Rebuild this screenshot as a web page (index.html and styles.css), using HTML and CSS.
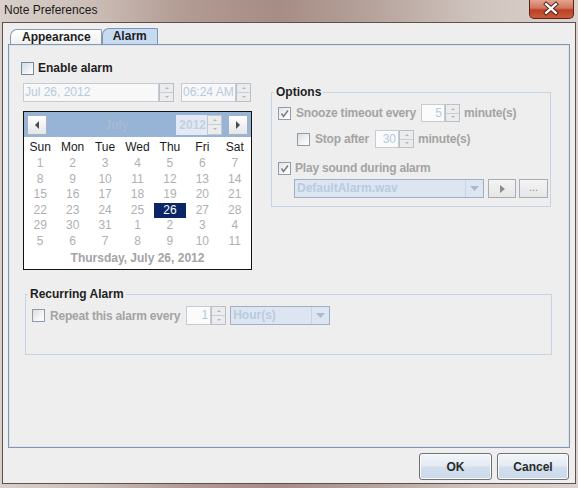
FILE: index.html
```html
<!DOCTYPE html>
<html>
<head>
<meta charset="utf-8">
<title>Note Preferences</title>
<link rel="stylesheet" href="styles.css">
</head>
<body>
<div class="window">
  <div class="titlebar">
    <span class="title">Note Preferences</span>
    <div class="close">
      <svg width="45" height="19" viewBox="0 0 45 19">
        <path d="M17.5 5 L27.5 14 M27.5 5 L17.5 14" stroke="#4a1a12" stroke-width="4.2" stroke-linecap="square"/>
        <path d="M17.5 5 L27.5 14 M27.5 5 L17.5 14" stroke="#ffffff" stroke-width="2.4" stroke-linecap="square"/>
      </svg>
    </div>
  </div>
  <div class="client">
    <div class="tabs">
      <div class="tab">Appearance</div>
      <div class="tab active">Alarm</div>
    </div>
    <div class="panel">
      <div class="toprow">
        <div class="leftcol">
          <div class="row enable"><span class="cb"></span><span class="lbl dark">Enable alarm</span></div>
          <div class="daterow">
            <span class="field date">Jul 26, 2012</span><span class="spin"><i></i><i></i></span>
            <span class="field time">06:24 AM</span><span class="spin"><i></i><i></i></span>
          </div>
          <div class="calendar">
            <div class="calhead">
              <span class="navbtn"><svg width="6" height="8" viewBox="0 0 6 8"><path d="M5 0 L1 4 L5 8 Z" fill="#4a4a4a"/></svg></span>
              <span class="month">July</span>
              <span class="year">2012</span><span class="spin yspin"><i></i><i></i></span>
              <span class="navbtn next"><svg width="6" height="8" viewBox="0 0 6 8"><path d="M1 0 L5 4 L1 8 Z" fill="#4a4a4a"/></svg></span>
            </div>
            <div class="dnames">
              <span>Sun</span><span>Mon</span><span>Tue</span><span>Wed</span><span>Thu</span><span>Fri</span><span>Sat</span>
            </div>
            <div class="days">
              <span>1</span><span>2</span><span>3</span><span>4</span><span>5</span><span>6</span><span>7</span>
              <span>8</span><span>9</span><span>10</span><span>11</span><span>12</span><span>13</span><span>14</span>
              <span>15</span><span>16</span><span>17</span><span>18</span><span>19</span><span>20</span><span>21</span>
              <span>22</span><span>23</span><span>24</span><span>25</span><span class="sel">26</span><span>27</span><span>28</span>
              <span>29</span><span>30</span><span>31</span><span>1</span><span>2</span><span>3</span><span>4</span>
              <span>5</span><span>6</span><span>7</span><span>8</span><span>9</span><span>10</span><span>11</span>
            </div>
            <div class="calfoot">Thursday, July 26, 2012</div>
          </div>
        </div>
        <fieldset class="group options">
          <legend>Options</legend>
          <div class="orow snooze">
            <span class="cb checked"><svg width="11" height="11" viewBox="0 0 11 11"><path d="M2.5 5.5 L4.5 8.5 L9 2.5" fill="none" stroke="#7d7d7d" stroke-width="1.5"/></svg></span>
            <span class="lbl">Snooze timeout every</span>
            <span class="field num n1">5</span><span class="spin"><i></i><i></i></span>
            <span class="lbl unit">minute(s)</span>
          </div>
          <div class="orow stop">
            <span class="cb"></span>
            <span class="lbl">Stop after</span>
            <span class="field num n2">30</span><span class="spin"><i></i><i></i></span>
            <span class="lbl unit">minute(s)</span>
          </div>
          <div class="orow play">
            <span class="cb checked"><svg width="11" height="11" viewBox="0 0 11 11"><path d="M2.5 5.5 L4.5 8.5 L9 2.5" fill="none" stroke="#7d7d7d" stroke-width="1.5"/></svg></span>
            <span class="lbl">Play sound during alarm</span>
          </div>
          <div class="orow comborow">
            <span class="combo wav"><span class="ctext">DefaultAlarm.wav</span><span class="carrow"><svg width="9" height="5" viewBox="0 0 9 5"><path d="M0 0 L9 0 L4.5 5 Z" fill="#a9bbd0"/></svg></span></span>
            <span class="sbtn playbtn"><svg width="5" height="8" viewBox="0 0 5 8"><path d="M0 0 L5 4 L0 8 Z" fill="#8c8c8c"/></svg></span>
            <span class="sbtn dots">...</span>
          </div>
        </fieldset>
      </div>
      <fieldset class="group recurring">
        <legend>Recurring Alarm</legend>
        <div class="orow rrow">
          <span class="cb"></span>
          <span class="lbl">Repeat this alarm every</span>
          <span class="field num n3">1</span><span class="spin"><i></i><i></i></span>
          <span class="combo hours"><span class="ctext">Hour(s)</span><span class="carrow"><svg width="9" height="5" viewBox="0 0 9 5"><path d="M0 0 L9 0 L4.5 5 Z" fill="#a9bbd0"/></svg></span></span>
        </div>
      </fieldset>
    </div>
    <div class="buttons">
      <button class="btn ok">OK</button>
      <button class="btn cancel">Cancel</button>
    </div>
  </div>
</div>
</body>
</html>
```

FILE: styles.css
```css
* { box-sizing: border-box; margin: 0; padding: 0; }
html, body { width: 578px; height: 488px; overflow: hidden; }
body {
  font-family: "Liberation Sans", Arial, sans-serif;
  font-size: 12px;
  background: linear-gradient(90deg, #d9d0cb 0%, #cbbdb6 16%, #b29b93 32%, #a68d85 48%, #b5a29b 64%, #cfc3bd 82%, #dcd3ce 100%);
}
.window { width: 578px; height: 488px; display: flex; flex-direction: column; }

.titlebar { height: 22px; display: flex; justify-content: space-between; align-items: flex-start; padding-left: 4px; }
.title { line-height: 20px; color: #1b1b1b; font-size: 12px; }
.close {
  width: 45px; height: 19px; margin-right: 4px;
  border: 1px solid #5e2318; border-top: none;
  border-radius: 0 0 5px 5px;
  background: linear-gradient(180deg, #e3a48f 0%, #d0765d 45%, #bd4126 55%, #c85a3b 100%);
  display: flex;
}
.close svg { display: block; margin: -1px 0 0 -1px; }

.client {
  flex: 1; margin: 0 2px 4px 2px;
  border: 1px solid #5d514d;
  background: #eeeeee;
  display: flex; flex-direction: column;
}

.tabs { height: 21px; padding: 5px 0 0 7px; display: flex; align-items: flex-end; }
.tab {
  height: 15px; padding: 0 10px 0 11px;
  border: 1px solid #8c99a8; border-bottom: none;
  border-radius: 7px 2px 0 0;
  background: linear-gradient(180deg, #ffffff, #f0f0f0);
  font-weight: bold; color: #1e1e1e; line-height: 14px;
}
.tab.active {
  height: 16px; padding: 0 10px 0 10px;
  background: #c6daf1; border-color: #7d93ae;
}

.panel {
  flex: 1; margin: 0 5px;
  border: 1px solid #8796a8;
  box-shadow: inset 0 0 0 1px #d6e4f4;
  padding-left: 11px;
  display: flex; flex-direction: column;
}

.toprow { display: flex; align-items: flex-start; }
.leftcol { width: 232px; margin-top: 15px; display: flex; flex-direction: column; }

.row, .orow { display: flex; align-items: center; }
.enable { height: 16px; }
.enable .cb { margin-left: 1px; }

.cb {
  width: 13px; height: 13px; flex: none;
  border: 1px solid #8e9cae;
  background: linear-gradient(135deg, #dcdcdc 0%, #f4f4f4 60%, #ffffff 100%);
  display: flex; align-items: center; justify-content: center;
}
.cb.checked { background: linear-gradient(135deg, #e4e4e4 0%, #f6f6f6 60%, #ffffff 100%); }
.enable .cb { border-color: #7488a0; background: linear-gradient(135deg, #d2dae4 0%, #eef1f5 60%, #ffffff 100%); }

.lbl { font-weight: bold; color: #a3a3a3; margin-left: 5px; white-space: nowrap; letter-spacing: -0.2px; }
.lbl.dark { color: #1e1e1e; margin-left: 4px; letter-spacing: 0; }

.daterow { display: flex; margin-top: 7px; margin-left: 3px; height: 19px; }
.field {
  height: 19px; border: 1px solid #c4cbd3; background: #f8f8f8;
  color: #b6c9de; line-height: 17px; padding: 0 1px; white-space: nowrap;
}
.field.date { width: 136px; }
.field.time { width: 55px; margin-left: 7px; }

.spin {
  width: 15px; height: 19px; flex: none;
  border: 1px solid #b8c0c9;
  background: #ececec;
  display: flex; flex-direction: column;
}
.spin i { flex: 1; display: flex; align-items: center; justify-content: center; }
.spin i:first-child { border-bottom: 1px solid #c8ced5; }
.spin i::before { content: ""; width: 0; height: 0; border-left: 2px solid transparent; border-right: 2px solid transparent; }
.spin i:first-child::before { border-bottom: 2px solid #b0b6bd; }
.spin i:last-child::before { border-top: 2px solid #b0b6bd; }

.calendar {
  margin-top: 9px; margin-left: 3px;
  width: 229px; height: 159px;
  border: 1px solid #111111;
  background: #ffffff;
  display: flex; flex-direction: column;
}
.calhead {
  height: 25px; flex: none; background: #97b3d5;
  display: flex; align-items: center; padding: 0 3px;
}
.navbtn {
  width: 20px; height: 20px; flex: none;
  border: 1px solid #a4b2c2;
  background: linear-gradient(180deg, #ffffff, #e4e6e9);
  display: flex; align-items: center; justify-content: center;
}
.navbtn.next { margin-left: 6px; }
.month { flex: 1; text-align: center; padding-left: 10px; font-weight: bold; color: #a7bad3; }
.year {
  width: 31px; height: 20px; background: #e3eaf3;
  color: #c3d0e1; font-weight: bold; text-align: right; line-height: 20px; padding-right: 1px;
}
.yspin { height: 20px; border-color: #c0c8d2; }

.dnames { height: 19px; display: grid; grid-template-columns: repeat(7, 1fr); align-items: center; flex: none; }
.dnames span { text-align: center; color: #1a1a1a; }
.days { display: grid; grid-template-columns: repeat(7, 1fr); grid-auto-rows: 15.5px; flex: none; }
.days span { text-align: center; color: #b0b0b0; line-height: 15.5px; }
.days span.sel { background: #0b2567; color: #ffffff; }
.calfoot { flex: 1; text-align: center; font-weight: bold; color: #a4a4a4; line-height: 19px; }

.group {
  border: 1px solid #c6d3e2;
  padding: 0;
}
.group legend {
  font-weight: bold; color: #1e1e1e; line-height: 14px;
  padding: 0 2px; margin-left: 2px;
}
.group > .orow { margin-left: 6px; }
.options { width: 280px; height: 122px; margin-left: 19px; margin-top: 40px; }
.snooze { margin-top: 5px; height: 18px; }
.snooze .field, .snooze .spin { height: 18px; }
.field.num { text-align: right; padding-right: 2px; background: #fbfbfb; }
.n1 { width: 24px; margin-left: 5px; }
.unit { margin-left: 4px; }
.stop { margin-top: 8px; height: 18px; padding-left: 19px; }
.stop .field, .stop .spin { height: 18px; }
.n2 { width: 24px; margin-left: 6px; }
.play { margin-top: 12px; height: 16px; }
.play .lbl { margin-left: 4px; }
.comborow { margin-top: 3px; height: 19px; padding-left: 16px; }

.combo {
  height: 19px; display: flex;
  border: 1px solid #9eb0c6;
  background: #dde6f0;
}
.ctext { flex: 1; font-weight: bold; color: #b7cbe1; line-height: 17px; padding-left: 2px; white-space: nowrap; }
.carrow { width: 18px; display: flex; align-items: center; justify-content: center; border-left: 1px solid #c9d4e0; }
.combo.wav { width: 190px; }
.sbtn {
  height: 19px; border: 1px solid #a8adb3;
  background: linear-gradient(180deg, #f4f4f4, #e6e6e6);
  display: flex; align-items: center; justify-content: center;
  color: #8a8a8a; font-size: 11px;
}
.playbtn { width: 28px; margin-left: 4px; }
.dots { width: 29px; margin-left: 3px; line-height: 11px; padding-bottom: 3px; }

.recurring { width: 527px; height: 68px; margin-left: 5px; margin-top: 17px; }
.rrow { margin-top: 5px; height: 19px; }
.n3 { width: 25px; margin-left: 6px; }
.combo.hours { width: 100px; margin-left: 4px; }

.buttons { height: 35px; flex: none; display: flex; justify-content: flex-end; padding: 5px 6px 3px 0; gap: 5px; }
.btn {
  height: 27px; border: 1px solid #707070; border-radius: 3px;
  background: linear-gradient(180deg, #f3f6fa 0%, #e3eaf3 48%, #d3dfed 52%, #cad8ea 100%);
  font-family: "Liberation Sans", Arial, sans-serif; font-size: 12px; font-weight: bold; color: #2a2a2a;
  box-shadow: inset 0 0 0 1px #f8fbff;
}
.btn.ok { width: 73px; }
.btn.cancel { width: 72px; }
```
